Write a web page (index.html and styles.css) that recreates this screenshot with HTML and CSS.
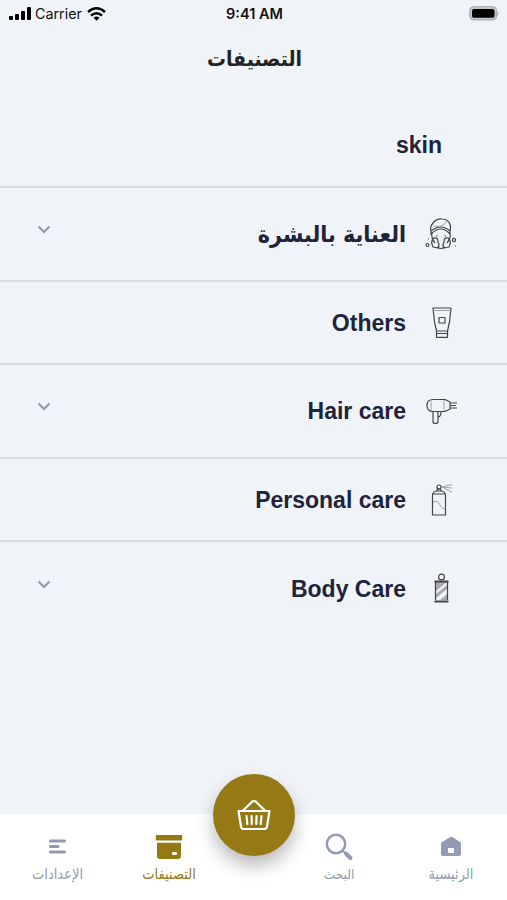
FILE: index.html
```html
<!DOCTYPE html>
<html lang="ar" dir="rtl">
<head>
<meta charset="utf-8">
<title>التصنيفات</title>
<link rel="stylesheet" href="styles.css">
</head>
<body>
<div class="screen">
  <div class="status" dir="ltr">
    <div class="carrier">
      <svg width="22" height="14" viewBox="0 0 22 14"><rect x="0" y="9" width="4" height="4" rx="1"/><rect x="6" y="7" width="4" height="6" rx="1"/><rect x="12" y="4" width="4" height="9" rx="1"/><rect x="18" y="0" width="4" height="13" rx="1"/></svg>
      <span class="carrier-name">Carrier</span>
      <svg width="19" height="14" viewBox="0 0 19 14" fill="none" stroke="#000" stroke-width="2.4"><path d="M1 5Q9.500-2.500 18 5M4 8.500q5.500-4.600 11 0"/><path d="M6.500 10.700q3-2.300 6 0l-3 3z" fill="#000" stroke="none"/></svg>
    </div>
    <span class="time">9:41 AM</span>
    <svg class="battery" width="31" height="15" viewBox="0 0 31 15"><rect x=".7" y=".7" width="27" height="13.300" rx="4" fill="#c5c8cb" stroke="#a5a8ab"/><rect x="3" y="3" width="22.500" height="8.800" rx="1.800"/><path d="M28.500 5q2.300 2.400 0 5z" fill="#a5a8ab"/></svg>
  </div>
  <h1 class="title"><span>التصنيفات</span></h1>
  <main class="list">
    <div class="row first"><span class="name skin">skin</span></div>
    <div class="row tall">
      <svg class="icon" viewBox="0 0 32 32"><path d="M6 13C4 8 10 0 17 1c6 0 10 5 8 12M6 13q10-8 19 0v3Q16 6 6 16zM7 16q-1 5 3 9M25 16q1 5-3 9M12 29q4 3 8 0"/><path class="soft" d="M9 8q9 2 13-5"/><path d="M8 29q-3-6 1-9 4-1 4 4 2 3 0 6zM24 29q3-6-1-9-4-1-4 4-2 3 0 6z"/><path d="M11 18h1.500m7 0H21"/><circle cx="2.500" cy="27" r="1.500"/><circle cx="29" cy="22" r="1.600"/><path d="M3 21h1m26 7h1" /></svg>
      <span class="name arabic">العناية بالبشرة</span>
      <svg class="chevron" viewBox="0 0 14 9"><path d="M1.500 1.500 7 7l5.500-5.500"/></svg>
    </div>
    <div class="row">
      <svg class="icon" viewBox="0 0 32 32"><path d="M8 1h18l-1.500 14-2 9h-11l-2-9zM11.500 24h11v6.300h-11zM11.500 26.500h11"/><path class="soft" d="M8 3.500h18"/><rect x="14" y="10.500" width="6" height="5.500"/></svg>
      <span class="name">Others</span>
    </div>
    <div class="row tall">
      <svg class="icon" viewBox="0 0 32 32"><path d="M20 4.500H8q-6 0-6 6t6 6h12l5-2.500V7zM25 8v5M8 16.500v10q0 2 2.500 2t2.500-2v-10M13 22q3 0 3-5.500"/><path class="soft" d="M6 5v11M19 5v11"/><path d="M25 8h7M25 10.500h6M25 13h7"/></svg>
      <span class="name">Hair care</span>
      <svg class="chevron" viewBox="0 0 14 9"><path d="M1.500 1.500 7 7l5.500-5.500"/></svg>
    </div>
    <div class="row">
      <svg class="icon" viewBox="0 0 32 32"><path d="M7.500 31V11q0-3 4-4h5q4 1 4 4v20zM8 10h12M11.500 7l1-2h3l1 2"/><circle cx="14" cy="3" r="2"/><path class="soft" d="m17 3 10-2.500M17 3l10 1M17 3l10 5M8 18q5-2 7 3t6 3"/></svg>
      <span class="name">Personal care</span>
    </div>
    <div class="row tall last">
      <svg class="icon" viewBox="0 0 32 32"><path fill="#aaa" stroke="none" d="M10.500 9h12v18h-12z"/><path d="m11 18 11-9v3L11 21zM11 25l11-9v5l-7 6h-4z" fill="#f1f5f8" stroke="none"/><path d="M10.500 9v18m12-18v18"/><path class="cap" d="M10 8h13v1H10zM10 28h13v1H10z"/><circle cx="16.500" cy="4" r="2.900"/></svg>
      <span class="name">Body Care</span>
      <svg class="chevron" viewBox="0 0 14 9"><path d="M1.500 1.500 7 7l5.500-5.500"/></svg>
    </div>
  </main>
  <nav class="nav">
    <a class="tab">
      <svg width="30" height="30" viewBox="0 0 30 30" fill="#929bb3"><path fill-rule="evenodd" d="M14.500 5q1-.5 2 0l7.500 5q1 1 1 2v10q0 2-2 2H7q-2 0-2-2V12q0-1 1-2zM12 16v5h6v-5z"/></svg>
      <span class="label home">الرئيسية</span>
    </a>
    <a class="tab">
      <svg width="30" height="30" viewBox="0 0 30 30" fill="none" stroke="#929bb3" stroke-linecap="round"><circle cx="12" cy="12" r="9.200" stroke-width="2.500"/><path d="m19 19 2 2" stroke-width="2"/><path d="m22 21.500 4.500 4.500" stroke-width="4"/></svg>
      <span class="label search">البحث</span>
    </a>
    <div class="slot">
      <div class="basket"><svg width="34" height="32" viewBox="0 0 34 32" fill="none" stroke="#fff" stroke-width="2.200" stroke-linejoin="round" stroke-linecap="round"><path d="M1.500 12h31L30 27.500q-.4 2.500-3 2.500H7q-2.600 0-3-2.500zM6 11.500 15.500 2.400q1.500-1.200 3 0L28 11.500M9.500 17l.8 8M14.600 17l.2 8M19.500 17l-.2 8M24.500 17l-.8 8"/></svg></div>
    </div>
    <a class="tab active">
      <svg width="30" height="30" viewBox="0 0 30 30" fill="#957914"><rect x="1.800" y="3" width="26.400" height="5.500" rx="1.200"/><path fill-rule="evenodd" d="M3 10.800h24V24q0 3-3 3H6q-3 0-3-3zM19 20q-2.500 1.500 0 3h3q2.500-1.500 0-3z"/></svg>
      <span class="label cats">التصنيفات</span>
    </a>
    <a class="tab">
      <svg width="30" height="30" viewBox="0 0 30 30" fill="none" stroke="#8f99b2" stroke-width="3" stroke-linecap="round"><path d="M7.500 9h14M7.500 14.500h7.500M7.500 20h14"/></svg>
      <span class="label settings">الإعدادات</span>
    </a>
  </nav>
</div>
</body>
</html>
```

FILE: styles.css
```css
* { box-sizing: border-box; }
body { margin: 0; background: #f0f4f8; color: #20233a; font-family: Inter, "DejaVu Sans", sans-serif; }
.screen { width: 507px; height: 900px; display: flex; flex-direction: column; overflow: hidden; }
svg { display: block; flex: none; }
.status { height: 27px; padding: 0 7px 0 9px; display: grid; grid-template-columns: 1fr auto 1fr; align-items: center; color: #111; }
.carrier { display: flex; align-items: center; gap: 4px; font-size: 14.3px; }
.carrier-name { width: 48px; white-space: nowrap; }
.time { font-size: 14.5px; font-weight: 600; white-space: nowrap; }
.battery { justify-self: end; }
.title { height: 77px; margin: 0; padding: 15px 0 0 2px; text-align: center; font: 700 21px/34px "DejaVu Sans Condensed", "DejaVu Sans", sans-serif; font-stretch: condensed; color: #222; }
.list { flex: 1; }
.row { height: 83px; padding: 0 50px 0 37px; display: flex; align-items: center; border-bottom: 2px solid #d8dce0; }
.row.first { height: 84px; padding-right: 65px; }
.row.tall { height: 94px; }
.row.last { border: 0; }
.icon { width: 32px; height: 32px; fill: none; stroke: #444; stroke-width: 1.2; stroke-linejoin: round; }
.icon .soft { stroke: #999; stroke-width: .9; }
.icon .cap { fill: #444; }
.name { margin-right: 19px; font: 700 23px/32px "Liberation Sans", sans-serif; white-space: nowrap; direction: ltr; }
.name.skin { margin-right: 0; }
.name.arabic { direction: rtl; font: 700 23px/32px "DejaVu Sans Condensed", "DejaVu Sans", sans-serif; font-stretch: condensed; }
.chevron { width: 14px; height: 9px; margin-right: auto; margin-bottom: 9px; fill: none; stroke: #8e9ab0; stroke-width: 2; }
.nav { height: 86px; padding: 0 0 0 2px; display: grid; grid-template-columns: 112px 112px 58px 112px 111px; background: #fff; }
.tab { padding-top: 18px; display: flex; flex-direction: column; align-items: center; color: #929bae; }
.tab.active { color: #957914; }
.label { margin-top: 2px; font: 14.5px/20px "DejaVu Sans Condensed", "DejaVu Sans", sans-serif; font-stretch: condensed; white-space: nowrap; }
.label.search { font-size: 13.5px; }
.slot { display: flex; justify-content: center; }
.basket { flex: none; width: 82px; height: 82px; margin-top: -40px; border-radius: 50%; background: #957914; display: flex; align-items: center; justify-content: center; box-shadow: 0 10px 18px rgba(0,0,0,.27); }
```
